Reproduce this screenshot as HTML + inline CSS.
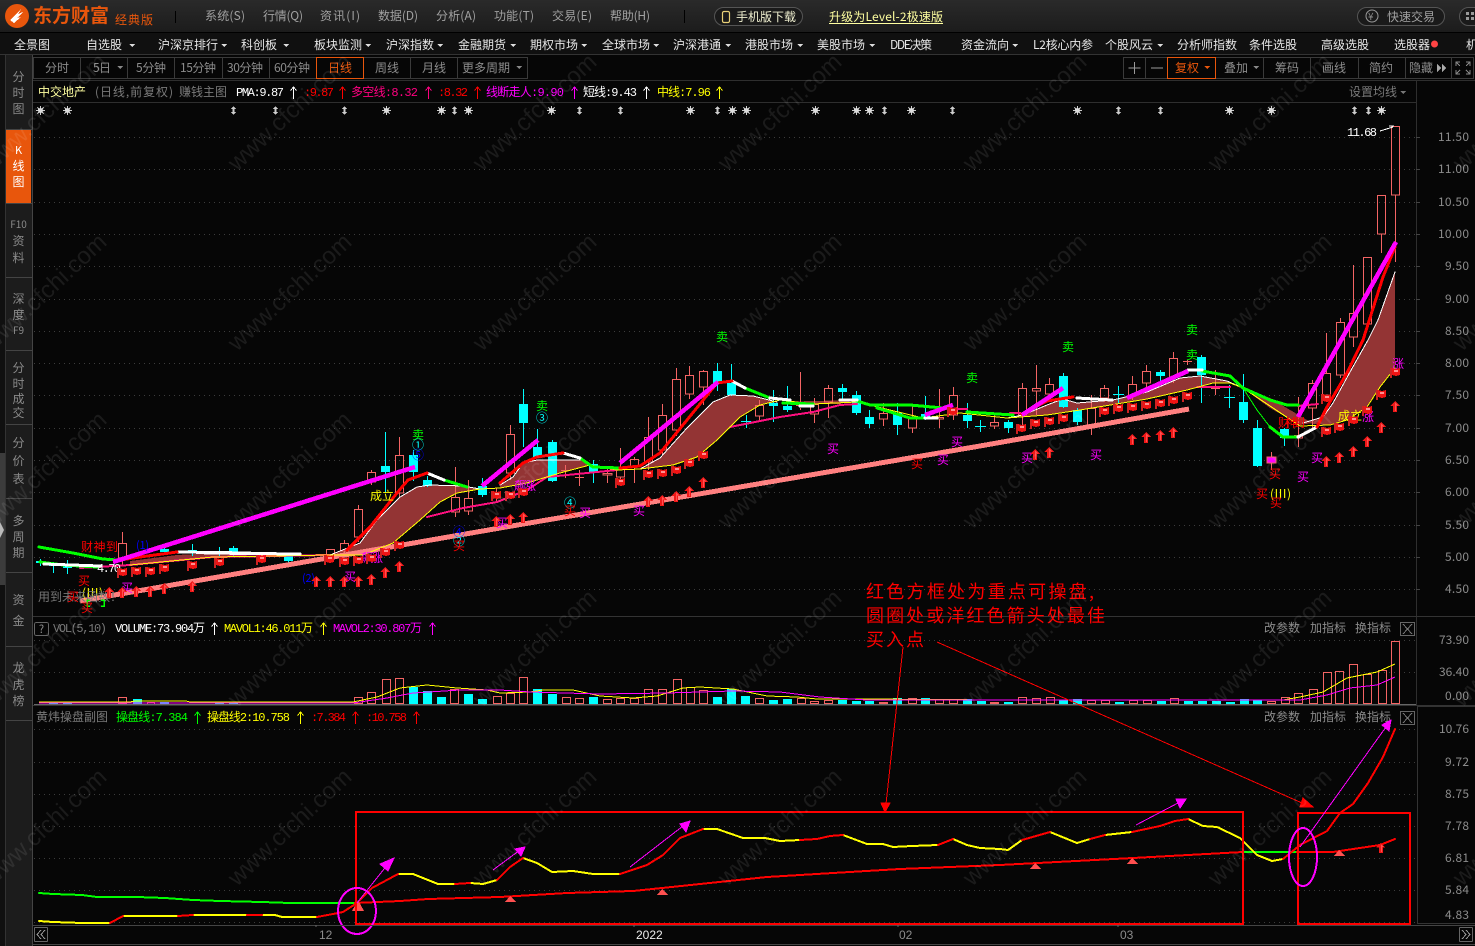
<!DOCTYPE html>
<html><head><meta charset="utf-8"><style>
html,body{margin:0;padding:0;background:#060606;width:1475px;height:946px;overflow:hidden}
svg{display:block;position:absolute;left:0;top:0}
text{font-family:"WenQuanYi Zen Hei","Noto Sans CJK SC",sans-serif;font-size:12px;white-space:pre}
path,rect,ellipse,circle{shape-rendering:crispEdges}
.m{font-family:"Liberation Mono","WenQuanYi Zen Hei","Noto Sans CJK SC",monospace;font-size:12px}
.g{fill:#8c8c8c}.w{fill:#fff}.n{fill:#e6e6e6}.y{fill:#ff0}.r{fill:#f00}.p{fill:#f0f}.gr{fill:#0f0}.c{fill:#0ff}.b{fill:#00f}
.e{font-size:12px;text-anchor:middle}
.s{fill:none;stroke-linejoin:round;stroke-linecap:round}
.grid{stroke:#3c3c3c;stroke-width:1;stroke-dasharray:1 4}
.ax{fill:#8c8c8c;font-family:"Liberation Mono",monospace;font-size:12px}
</style></head><body>
<svg width="1475" height="946" viewBox="0 0 1475 946" xmlns="http://www.w3.org/2000/svg">
<defs>
<linearGradient id="tb" x1="0" y1="0" x2="0" y2="1"><stop offset="0" stop-color="#2a2a2a"/><stop offset="1" stop-color="#1c1c1c"/></linearGradient>
<symbol id="ar" viewBox="0 0 10 12" overflow="visible"><path d="M5 0L10 5H7V11H3V5H0Z" fill="#f01818"/><path d="M5 1.5L8 4.5H6V10H5Z" fill="#ff5050"/></symbol>
<symbol id="fl" viewBox="0 0 11 10" overflow="visible"><path d="M0 1H2V11H0Z" fill="#c22"/><path d="M2 1L6 2L10 1V8L6 9L2 8Z" fill="#f01414"/><path d="M4 3H8V5H4Z" fill="#ff9090"/></symbol>
<symbol id="st" viewBox="0 0 9 9" overflow="visible"><path d="M4.5 0V9M0 4.500H9M1.300 1.300L7.700 7.700M7.700 1.300L1.300 7.700" stroke="#ccc" stroke-width="1.300"/><circle cx="4.500" cy="4.500" r="2.600" fill="#ddd"/></symbol>
<symbol id="ud" viewBox="0 0 5 9" overflow="visible"><path d="M2.500 0L5 3H3.500V6H5L2.500 9L0 6H1.500V3H0Z" fill="#ccc"/></symbol>
<symbol id="ua" viewBox="0 0 7 13" overflow="visible"><path d="M3.500 1V13M0.500 4.500L3.500 1L6.500 4.500" fill="none" stroke="currentColor"/></symbol>
</defs>

<!-- top bar -->
<rect width="1475" height="32" fill="url(#tb)"/>
<rect y="32" width="1475" height="1" fill="#000"/>
<rect y="33" width="1475" height="21" fill="#101010"/>
<rect y="54" width="1475" height="1" fill="#333"/>
<circle cx="17" cy="16" r="12" fill="#e8560c" style="shape-rendering:auto"/>
<path d="M10 20L22 8L18 14L23 12L17 18L21 17L14 23Z" fill="#fff"/>
<text x="33" y="22" style="font-size:19px;font-weight:bold" fill="#e8560c" textLength="76">东方财富</text>
<text x="115" y="24" fill="#e8560c" textLength="38">经典版</text>
<rect x="175" y="11" width="1" height="12" fill="#000"/><rect x="684" y="10" width="1" height="13" fill="#000"/>
<g class="g" style="fill:#a0a0a0">
<text x="205" y="20" textLength="40">系统(S)</text><text x="263" y="20" textLength="40">行情(Q)</text><text x="320" y="20" textLength="40">资讯(I)</text><text x="378" y="20" textLength="40">数据(D)</text><text x="436" y="20" textLength="40">分析(A)</text><text x="494" y="20" textLength="40">功能(T)</text><text x="552" y="20" textLength="40">交易(E)</text><text x="610" y="20" textLength="40">帮助(H)</text>
</g>
<rect x="714.500" y="7.500" width="88" height="18" rx="9" fill="#1a1a1a" stroke="#555" style="shape-rendering:auto"/>
<rect x="722.500" y="11.500" width="7" height="11" rx="1.500" fill="none" stroke="#e8d078" stroke-width="1.200" style="shape-rendering:auto"/>
<text x="736" y="21" fill="#f0f0d0" textLength="60">手机版下载</text>
<text x="829" y="21" fill="#ffffa0" textLength="114">升级为Level-2极速版</text>
<rect x="829" y="23" width="114" height="1" fill="#ffffa0"/>
<rect x="1357.500" y="7.500" width="87" height="18" rx="9" fill="#1a1a1a" stroke="#555" style="shape-rendering:auto"/>
<circle cx="1372" cy="16" r="6" fill="none" stroke="#999" style="shape-rendering:auto"/><text x="1368" y="20" class="g" style="font-size:10px">¥</text>
<text x="1387" y="21" style="fill:#a0a0a0" textLength="48">快速交易</text>
<rect x="1459.500" y="7.500" width="30" height="18" rx="9" fill="#1a1a1a" stroke="#555" style="shape-rendering:auto"/>
<path d="M1466 12h3v3h-3zM1471 12h3v3h-3zM1466 17h3v3h-3zM1471 17h3v3h-3z" fill="#999"/>

<!-- nav -->
<g class="n">
<text x="14" y="49">全景图</text><text x="86" y="49">自选股</text><text x="158" y="49">沪深京排行</text><text x="241" y="49">科创板</text><text x="314" y="49">板块监测</text><text x="386" y="49">沪深指数</text><text x="458" y="49">金融期货</text><text x="530" y="49">期权市场</text><text x="602" y="49">全球市场</text><text x="673" y="49">沪深港通</text><text x="745" y="49">港股市场</text><text x="817" y="49">美股市场</text><text x="890" y="49" textLength="42">DDE决策</text><text x="961" y="49">资金流向</text><text x="1033" y="49" textLength="60">L2核心内参</text><text x="1105" y="49">个股风云</text><text x="1177" y="49">分析师指数</text><text x="1249" y="49">条件选股</text><text x="1321" y="49">高级选股</text><text x="1394" y="49">选股器</text><text x="1466" y="49">机</text>
</g>
<path d="M129 44h6l-3 3zM221 44h6l-3 3zM283 44h6l-3 3zM365 44h6l-3 3zM437 44h6l-3 3zM510 44h6l-3 3zM581 44h6l-3 3zM653 44h6l-3 3zM725 44h6l-3 3zM797 44h6l-3 3zM869 44h6l-3 3zM1012 44h6l-3 3zM1157 44h6l-3 3z" fill="#ddd"/>
<circle cx="1434.500" cy="44" r="3.500" fill="#f44" style="shape-rendering:auto"/>

<!-- left sidebar -->
<rect y="55" width="6" height="891" fill="#101010"/>
<path d="M0 453H5V585H0Z" fill="#3c3c3c"/><path d="M0 522L4 530L0 538Z" fill="#bbb"/>
<rect x="6" y="55" width="26" height="891" fill="#1c1c1c"/>
<rect x="6" y="130" width="25" height="73" fill="#e8560c"/>
<path d="M6 129.500H32M6 203.500H32M6 277.500H32M6 350.500H32M6 424.500H32M6 498.500H32M6 572.500H32M6 646.500H32M6 720.500H32" stroke="#444"/>
<rect x="5" y="55" width="1" height="891" fill="#333"/>
<rect x="32" y="55" width="1" height="891" fill="#444"/>
<g class="g" text-anchor="middle" style="fill:#8a8a8a">
<text x="18.500" y="81">分</text><text x="18.500" y="97">时</text><text x="18.500" y="113">图</text>
<text class="w" style="fill:#fff;font-size:11px" x="18.500" y="154">K</text><text style="fill:#fff" x="18.500" y="170">线</text><text style="fill:#fff" x="18.500" y="186">图</text>
<text style="font-size:10px" x="18.500" y="228">F10</text><text x="18.500" y="245">资</text><text x="18.500" y="262">料</text>
<text x="18.500" y="303">深</text><text x="18.500" y="319">度</text><text style="font-size:10px" x="18.500" y="334">F9</text>
<text x="18.500" y="372">分</text><text x="18.500" y="388">时</text><text x="18.500" y="403">成</text><text x="18.500" y="417">交</text>
<text x="18.500" y="447">分</text><text x="18.500" y="465">价</text><text x="18.500" y="483">表</text>
<text x="18.500" y="525">多</text><text x="18.500" y="541">周</text><text x="18.500" y="557">期</text>
<text x="18.500" y="604">资</text><text x="18.500" y="625">金</text>
<text x="18.500" y="672">龙</text><text x="18.500" y="689">虎</text><text x="18.500" y="705">榜</text>
</g>

<!-- toolbar -->
<rect x="33" y="55" width="1442" height="26" fill="#060606"/>
<path d="M33.500 57.500H527.500V78.500H33.500ZM80.500 57V79M127.500 57V79M174.500 57V79M222.500 57V79M269.500 57V79M410.500 57V79M457.500 57V79" fill="none" stroke="#3a3a3a"/>
<rect x="316.500" y="57.500" width="47" height="21" fill="#060606" stroke="#e8560c"/>
<g style="fill:#8c8c8c">
<text x="45" y="72">分时</text><text x="93" y="72" textLength="18">5日</text><text x="136" y="72" textLength="30">5分钟</text><text x="180" y="72" textLength="36">15分钟</text><text x="227" y="72" textLength="36">30分钟</text><text x="274" y="72" textLength="36">60分钟</text><text x="375" y="72">周线</text><text x="422" y="72">月线</text><text x="462" y="72">更多周期</text>
</g>
<text x="328" y="72" fill="#e8560c">日线</text>
<path d="M117 66h6l-3 3zM516 66h6l-3 3zM1253 66h6l-3 3z" fill="#888"/>
<path d="M1123.500 57.500H1473.500V78.500H1123.500ZM1145.500 57V79M1263.500 57V79M1310.500 57V79M1358.500 57V79M1405.500 57V79M1451.500 57V79" fill="none" stroke="#3a3a3a"/>
<rect x="1167.500" y="57.500" width="48" height="21" fill="#060606" stroke="#e8560c"/>
<path d="M1134.500 62V74M1128.500 68H1140.500M1151 68H1163" stroke="#999" fill="none"/>
<text x="1175" y="72" fill="#e8560c">复权</text><path d="M1204 66h6l-3 3z" fill="#e8560c"/>
<g style="fill:#8c8c8c"><text x="1224" y="72">叠加</text><text x="1275" y="72">筹码</text><text x="1322" y="72">画线</text><text x="1369" y="72">简约</text><text x="1409" y="72">隐藏</text></g>
<path d="M1437 63.500L1441 68L1437 72.500ZM1442 63.500L1446 68L1442 72.500Z" fill="#aaa"/>
<path d="M1456 66V62H1460M1466 62H1470V66M1456 70V74H1460M1470 70V74H1466M1456 62L1460 66M1470 62L1466 66M1456 74L1460 70M1470 74L1466 70" fill="none" stroke="#888"/>
<rect x="33" y="80" width="1442" height="1" fill="#2e2e2e"/>

<!-- info row -->
<g>
<text x="38" y="96" fill="#ffffa0">中交地产</text>
<text x="95" y="96" fill="#7a7a7a" textLength="78">(日线,前复权)</text>
<text x="179" y="96" fill="#7a7a7a">赚钱主图</text>
<text x="236" y="96" class="m w" textLength="48">PMA:9.87</text>
<text x="304" y="96" class="m r" textLength="30">:9.87</text>
<text x="351" y="96" class="m" fill="#ff0080" textLength="67">多空线:8.32</text>
<text x="438" y="96" class="m r" textLength="30">:8.32</text>
<text x="486" y="96" class="m p" textLength="78">线断走人:9.90</text>
<text x="583" y="96" class="m w" textLength="54">短线:9.43</text>
<text x="657" y="96" class="m y" textLength="54">中线:7.96</text>
</g>
<use href="#ua" x="290" y="86" width="7" height="13" color="#fff"/><use href="#ua" x="339" y="86" width="7" height="13" color="#f00"/><use href="#ua" x="425" y="86" width="7" height="13" color="#ff0080"/><use href="#ua" x="474" y="86" width="7" height="13" color="#f00"/><use href="#ua" x="571" y="86" width="7" height="13" color="#f0f"/><use href="#ua" x="643" y="86" width="7" height="13" color="#fff"/><use href="#ua" x="716" y="86" width="7" height="13" color="#ff0"/>
<text x="1349" y="96" fill="#7a7a7a">设置均线</text><path d="M1400 91h6l-3 3z" fill="#777"/>
<rect x="33" y="102" width="1383" height="1" fill="#2e2e2e"/>
<rect x="1416" y="81" width="1" height="535" fill="#2e2e2e"/>

<!-- star row -->
<g>
<use href="#st" x="36" y="106" width="9" height="9"/><use href="#st" x="63" y="106" width="9" height="9"/><use href="#st" x="382" y="106" width="9" height="9"/><use href="#st" x="437" y="106" width="9" height="9"/><use href="#st" x="464" y="106" width="9" height="9"/><use href="#st" x="547" y="106" width="9" height="9"/><use href="#st" x="686" y="106" width="9" height="9"/><use href="#st" x="728" y="106" width="9" height="9"/><use href="#st" x="742" y="106" width="9" height="9"/><use href="#st" x="811" y="106" width="9" height="9"/><use href="#st" x="852" y="106" width="9" height="9"/><use href="#st" x="865" y="106" width="9" height="9"/><use href="#st" x="907" y="106" width="9" height="9"/><use href="#st" x="1073" y="106" width="9" height="9"/><use href="#st" x="1225" y="106" width="9" height="9"/><use href="#st" x="1267" y="106" width="9" height="9"/><use href="#st" x="1377" y="106" width="9" height="9"/>
<use href="#ud" x="231" y="106" width="5" height="9"/><use href="#ud" x="273" y="106" width="5" height="9"/><use href="#ud" x="342" y="106" width="5" height="9"/><use href="#ud" x="452" y="106" width="5" height="9"/><use href="#ud" x="577" y="106" width="5" height="9"/><use href="#ud" x="618" y="106" width="5" height="9"/><use href="#ud" x="715" y="106" width="5" height="9"/><use href="#ud" x="882" y="106" width="5" height="9"/><use href="#ud" x="950" y="106" width="5" height="9"/><use href="#ud" x="1116" y="106" width="5" height="9"/><use href="#ud" x="1158" y="106" width="5" height="9"/><use href="#ud" x="1352" y="106" width="5" height="9"/><use href="#ud" x="1366" y="106" width="5" height="9"/>
</g>

<!-- grid -->
<path class="grid" d="M34 137.500H1416M34 169.500H1416M34 202.500H1416M34 234.500H1416M34 266.500H1416M34 299.500H1416M34 331.500H1416M34 363.500H1416M34 395.500H1416M34 428.500H1416M34 460.500H1416M34 492.500H1416M34 525.500H1416M34 557.500H1416M34 589.500H1416M34 640.500H1416M34 672.500H1416M34 729.500H1416M34 762.500H1416M34 794.500H1416M34 826.500H1416M34 858.500H1416M34 890.500H1416M34 922.500H1416"/>
<path d="M1416 137.500h4M1416 169.500h4M1416 202.500h4M1416 234.500h4M1416 266.500h4M1416 299.500h4M1416 331.500h4M1416 363.500h4M1416 395.500h4M1416 428.500h4M1416 460.500h4M1416 492.500h4M1416 525.500h4M1416 557.500h4M1416 589.500h4" stroke="#444"/>

<!-- axis labels -->
<g class="ax">
<text x="1438" y="141" textLength="31">11.50</text><text x="1438" y="173" textLength="31">11.00</text><text x="1438" y="206" textLength="31">10.50</text><text x="1438" y="238" textLength="31">10.00</text><text x="1445" y="270" textLength="24">9.50</text><text x="1445" y="303" textLength="24">9.00</text><text x="1445" y="335" textLength="24">8.50</text><text x="1445" y="367" textLength="24">8.00</text><text x="1445" y="399" textLength="24">7.50</text><text x="1445" y="432" textLength="24">7.00</text><text x="1445" y="464" textLength="24">6.50</text><text x="1445" y="496" textLength="24">6.00</text><text x="1445" y="529" textLength="24">5.50</text><text x="1445" y="561" textLength="24">5.00</text><text x="1445" y="593" textLength="24">4.50</text>
<text x="1439" y="644" textLength="30">73.90</text><text x="1439" y="676" textLength="30">36.40</text><text x="1445" y="700" textLength="24">0.00</text>
<text x="1439" y="733" textLength="30">10.76</text><text x="1445" y="766" textLength="24">9.72</text><text x="1445" y="798" textLength="24">8.75</text><text x="1445" y="830" textLength="24">7.78</text><text x="1445" y="862" textLength="24">6.81</text><text x="1445" y="894" textLength="24">5.84</text><text x="1445" y="919" textLength="24">4.83</text>
</g>

<!-- bands -->
<g fill="#933434">
<path d="M130 561L177 555L215 553L250 553L290 553L213 557L130 565Z"/>
<path d="M330 555L360 543L377 520L400 497L417 487L430 485L463 486L480 489L457 493L440 502L420 520L393 543L363 555Z"/>
<path d="M500 485L513 477L523 463L537 460L583 460L590 465L560 473L527 483L500 488Z"/>
<path d="M617 470L640 469L660 458L687 428L713 402L730 395L753 396L777 402L760 405L740 417L717 440L697 457L673 465L640 469Z"/>
<path d="M777 402L813 401L857 400L840 404L813 404Z"/>
<path d="M1007 418L1023 415L1047 405L1063 399L1077 403L1113 400L1147 392L1180 378L1200 376L1227 381L1243 388L1230 383L1213 383L1187 390L1147 399L1080 410L1047 415Z"/>
<path d="M1243 388L1270 398L1312 423L1300 425L1270 408Z"/>
<path d="M1303 423L1323 417L1333 403L1350 372L1368 340L1378 320L1395 272V368L1380 387L1367 407L1347 420L1330 425Z"/>
</g>

<!-- candles -->
<g>
<path fill="none" stroke="#f46464" d="M122.500 532V543M122.500 558V565M118.500 543.500h8V558h-8zM330.500 550V549M330.500 555V558M326.500 549.500h8V555h-8zM344.500 540V543M344.500 551V556M340.500 543.500h8V551h-8zM358.500 505V509M358.500 537V542M354.500 509.500h8V537h-8zM371.500 470V472M371.500 482V485M367.500 472.500h8V482h-8zM399.500 437V455M399.500 493V497M395.500 455.500h8V493h-8zM455.500 467V497M455.500 512V517M451.500 497.500h8V512h-8zM468.500 480V498M468.500 511V515M464.500 498.500h8V511h-8zM496.500 488V492M496.500 498V503M492.500 492.500h8V498h-8zM510.500 425V434M510.500 473V480M506.500 434.500h8V473h-8zM565.500 465V478M561 470.500h9M579.500 470V486M575 477.500h9M607.500 467V473M607.500 475V483M603 473.500h9V475h-9zM620.500 448V467M620.500 477V483M616.500 467.500h8V477h-8zM634.500 457V459M634.500 467V483M630.500 459.500h8V467h-8zM648.500 417V437M648.500 462V470M644.500 437.500h8V462h-8zM662.500 404V415M662.500 450V455M658.500 415.500h8V450h-8zM676.500 368V379M676.500 430V436M672.500 379.500h8V430h-8zM689.500 366V375M689.500 394V399M685.500 375.500h8V394h-8zM703.500 370V371M703.500 387V405M699.500 371.500h8V387h-8zM759.500 400V405M759.500 416V420M755.500 405.500h8V416h-8zM800.500 372V405M800.500 408V410M796 405.500h9M814.500 398V404M814.500 414V423M810.500 404.500h8V414h-8zM828.500 385V388M828.500 402V418M824.500 388.500h8V402h-8zM883.500 403V413M883.500 419V426M879.500 413.500h8V419h-8zM912.500 405V418M912.500 428V433M908.500 418.500h8V428h-8zM939.500 389V417M939.500 419V428M935.500 417.500h8V419h-8zM953.500 387V395M953.500 415V420M949.500 395.500h8V415h-8zM994.500 415V422M994.500 426V429M990.500 422.500h8V426h-8zM1022.500 383V388M1022.500 415V425M1018.500 388.500h8V415h-8zM1036.500 365V388M1036.500 391V415M1032.500 388.500h8V391h-8zM1049.500 378V384M1049.500 394V400M1045.500 384.500h8V394h-8zM1091.500 395V408M1091.500 427V435M1087.500 408.500h8V427h-8zM1104.500 385V388M1104.500 398V402M1100.500 388.500h8V398h-8zM1132.500 376V384M1132.500 395V400M1128.500 384.500h8V395h-8zM1146.500 365V371M1146.500 383V392M1142.500 371.500h8V383h-8zM1173.500 352V358M1173.500 377V383M1169.500 358.500h8V377h-8zM1187.500 360V365M1183 361.500h9M1215.500 370V395M1211 388.500h9M1298.500 397V435M1298.500 438V447M1294.500 435.500h8V438h-8zM1312.500 380V383M1312.500 408V430M1308.500 383.500h8V408h-8zM1326.500 333V373M1322.500 373.500h8V395h-8zM1340.500 318V322M1340.500 375V378M1336.500 322.500h8V375h-8zM1353.500 265V313M1353.500 337V347M1349.500 313.500h8V337h-8zM1367.500 257V257M1367.500 324V330M1363.500 257.500h8V324h-8zM1381.500 234V253M1377.500 195.500h8V234h-8zM1395.500 195V262M1391.500 126.500h8V195h-8z"/>
<path fill="none" stroke="#0ff" d="M40.500 559V566M53.500 562V573M67.500 560V574M164.500 546V555M192.500 544V556M219.500 547V557M233.500 546V556M288.500 553V565M385.500 432V493M413.500 450V481M427.500 476V487M482.500 478V497M523.500 389V447M537.500 429V458M552.500 440V482M593.500 460V483M717.500 363V391M731.500 364V396M746.500 415V428M741 421.500h10M773.500 390V422M787.500 386V412M842.500 384V400M856.500 391V415M869.500 410V428M897.500 403V435M925.500 396V420M967.500 403V428M980.500 420V432M975 426.500h11M1008.500 420V433M1063.500 373V408M1077.500 408V425M1118.500 386V403M1113 394.500h11M1160.500 370V382M1201.500 355V403M1229.500 385V408M1224 397.500h11M1243.500 374V423M1257.500 420V467M1284.500 428V446"/>
<path fill="#0ff" d="M36 561h9v2h-9zM49 564h9v2h-9zM63 565h9v3h-9zM160 549h9v3h-9zM188 550h9v3h-9zM215 552h9v2h-9zM229 548h9v5h-9zM284 556h9v5h-9zM381 466h9v6h-9zM409 455h9v17h-9zM423 480h9v6h-9zM478 486h9v9h-9zM519 404h9v19h-9zM533 447h9v10h-9zM548 442h9v39h-9zM589 464h9v9h-9zM713 371h9v12h-9zM727 383h9v12h-9zM769 403h9v3h-9zM783 406h9v4h-9zM838 388h9v4h-9zM852 395h9v18h-9zM865 417h9v7h-9zM893 413h9v12h-9zM921 414h9v4h-9zM963 415h9v6h-9zM1004 422h9v6h-9zM1059 376h9v31h-9zM1073 410h9v12h-9zM1156 372h9v4h-9zM1197 357h9v18h-9zM1239 402h9v18h-9zM1253 428h9v38h-9zM1280 429h9v9h-9z"/>
<path d="M1271.500 452V470" stroke="#f46464"/><rect x="1267" y="457" width="9" height="6" fill="#f0f" stroke="#f46464"/>
</g>

<!-- salmon trend -->
<path class="s" d="M80 601L500 528L980 446L1189 409" stroke="#ff8080" stroke-width="5" style="stroke-linecap:butt"/>

<!-- pink lower -->
<path class="s" stroke="#ff1080" stroke-width="2" d="M80 568L130 565L213 557L330 555M427 517L463 508L497 502L527 490L547 477L617 470M730 427L780 417L813 412L840 405L857 404M957 409L967 409M1010 413L1020 413M1197 387L1230 387M1298 406L1318 404"/>

<!-- thin band edges -->
<g class="s" stroke-width="1">
<path stroke="#fff" d="M330 555L360 543L377 520L400 497L417 487L430 485L463 486L480 489M500 485L513 477L523 463L537 460L583 460M617 470L640 469L660 458L687 428L713 402L730 395L753 396L777 402M1007 418L1023 415L1047 405L1063 399L1077 403L1113 400L1147 392L1180 378L1200 376L1227 381L1243 388M1303 423L1323 417L1333 403L1350 372L1368 340L1378 320L1395 272"/>
<path stroke="#ff0" d="M130 565L213 557L330 555L363 555L393 543L420 520L440 502L457 493L480 489L500 488L527 483L560 473L590 465L617 470L640 469L673 465L697 457L717 440L740 417L760 405L780 400L813 404L857 402L890 410L923 418L960 413L1007 418L1047 415L1080 410L1147 399L1187 390L1213 383L1230 383L1243 388L1300 426L1330 425L1347 420L1367 407L1380 387L1395 368"/>
<path stroke="#0f0" d="M1243 388L1257 410L1270 427L1283 437"/>
</g>

<!-- thicker lines -->
<g class="s" stroke-width="3">
<path stroke="#0f0" d="M39 547L73 553L103 559L117 560M40 562L63 565L97 567M444 480L467 487M580 458L593 467L620 468M745 388L770 398M783 403L813 404M857 401L870 405L910 405L943 408M967 412L1013 415M877 408L910 418L925 418M1202 371L1230 376L1243 388L1270 400L1287 405L1298 405M1270 427L1283 437L1298 437"/>
<path stroke="#fff" d="M44 564L100 566M177 552L250 553M427 473L444 480M563 453L580 458M732 381L745 388M770 398L790 400M800 406L813 406M840 400L857 400M925 418L937 418M1077 398L1112 400M1188 370L1202 370M1298 437L1317 427M205 553L300 554"/>
<path stroke="#f00" d="M120 560L140 557L177 552M347 550L370 527L397 493L408 480L427 473M500 483L523 463L537 457L563 453M620 468L640 466L660 453L687 420L717 383L732 381M1022 414L1047 401L1073 397M1317 427L1327 407L1347 373L1363 340L1383 277L1395 247"/>
<path stroke="#f0f" stroke-width="4.500" d="M113 562L415 467M482 486L538 440M620 463L718 382M925 415L953 405M1022 415L1063 388M1127 398L1188 371M1298 417L1396 242" style="stroke-linecap:butt"/>
</g>

<!-- 11.68 -->
<text x="1347" y="136" class="m w" textLength="30">11.68</text>
<path d="M1380 131L1393 127M1389 126H1394" stroke="#fff" fill="none"/>

<!-- labels -->
<g>
<text x="81" y="551" class="r" style="font-size:12px" textLength="37">财神到</text>
<text x="136" y="549" class="b" style="font-size:11px" textLength="13">(1)</text>
<text x="302" y="582" class="b" style="font-size:11px" textLength="13">(2)</text>
<text x="82" y="597" class="y" style="font-size:12px" textLength="21">(III)</text>
<text x="38" y="601" fill="#777">用到未来函数！</text>
<path d="M90 600H87V606H90M101 600H104V606H101" stroke="#0f0" stroke-width="1.500" fill="none"/>
<text x="370" y="500" class="y" style="font-size:12px" textLength="24">成立</text>
<text x="1338" y="420" class="y" style="font-size:12px" textLength="24">成立</text>
<text x="1278" y="427" class="r" style="font-size:12px" textLength="27">财神到</text>
<text x="1270" y="498" class="y" style="font-size:12px" textLength="21">(III)</text>
<g class="e">
<text class="e r" x="84" y="585">买</text><text class="e p" x="127" y="592">买</text><text class="e r" x="73" y="601">买</text><text class="e r" x="87" y="612">买</text>
<text class="e gr" x="418" y="439">卖</text><text class="e c" x="418" y="449">①</text><text class="e b" x="418" y="459">⑤</text>
<text class="e b" x="459" y="536">④</text><text class="e c" x="459" y="545">②</text><text class="e r" x="459" y="550">买</text><text class="e p" x="502" y="527">买</text><text class="e p" x="350" y="581">买</text>
<text class="p" x="372" y="562" textLength="22">飙涨</text>
<text class="e gr" x="722" y="341">卖</text><text class="e gr" x="542" y="410">卖</text><text class="e c" x="542" y="422">③</text><text class="p" x="525" y="490" textLength="22">飙涨</text>
<text class="e c" x="570" y="507">④</text><text class="e r" x="570" y="515">买</text><text class="e p" x="585" y="517">买</text><text class="e p" x="639" y="515">买</text>
<text class="e p" x="833" y="453">买</text>
<text class="e p" x="957" y="446">买</text><text class="e r" x="917" y="468">买</text><text class="e p" x="943" y="464">买</text><text class="e gr" x="972" y="382">卖</text>
<text class="e gr" x="1068" y="351">卖</text><text class="e gr" x="1192" y="334">卖</text><text class="e gr" x="1192" y="359">卖</text><text class="e p" x="1027" y="462">买</text><text class="e p" x="1096" y="459">买</text>
<text class="e r" x="1275" y="478">买</text><text class="e r" x="1262" y="498">买</text><text class="e r" x="1276" y="507">买</text><text class="e p" x="1303" y="481">买</text><text class="e p" x="1317" y="462">买</text><text class="e p" x="1368" y="421">涨</text><text class="e p" x="1398" y="368">涨</text>
</g>
<text x="97" y="572" class="m w" textLength="24">4.70</text>
</g>

<!-- flags -->
<g>
<use href="#fl" x="117" y="567" width="11" height="10"/><use href="#fl" x="131" y="566" width="11" height="10"/><use href="#fl" x="145" y="566" width="11" height="10"/><use href="#fl" x="159" y="563" width="11" height="10"/><use href="#fl" x="187" y="560" width="11" height="10"/><use href="#fl" x="214" y="557" width="11" height="10"/><use href="#fl" x="256" y="554" width="11" height="10"/><use href="#fl" x="324" y="554" width="11" height="10"/><use href="#fl" x="339" y="556" width="11" height="10"/><use href="#fl" x="353" y="555" width="11" height="10"/><use href="#fl" x="366" y="553" width="11" height="10"/><use href="#fl" x="380" y="547" width="11" height="10"/><use href="#fl" x="394" y="540" width="11" height="10"/><use href="#fl" x="491" y="490" width="11" height="10"/><use href="#fl" x="505" y="490" width="11" height="10"/><use href="#fl" x="518" y="487" width="11" height="10"/><use href="#fl" x="615" y="477" width="11" height="10"/><use href="#fl" x="643" y="469" width="11" height="10"/><use href="#fl" x="657" y="468" width="11" height="10"/><use href="#fl" x="671" y="465" width="11" height="10"/><use href="#fl" x="684" y="458" width="11" height="10"/><use href="#fl" x="698" y="450" width="11" height="10"/><use href="#fl" x="947" y="406" width="11" height="10"/>
<use href="#fl" x="1016" y="423" width="11" height="10"/><use href="#fl" x="1030" y="418" width="11" height="10"/><use href="#fl" x="1044" y="416" width="11" height="10"/><use href="#fl" x="1058" y="413" width="11" height="10"/><use href="#fl" x="1099" y="406" width="11" height="10"/><use href="#fl" x="1113" y="403" width="11" height="10"/><use href="#fl" x="1127" y="402" width="11" height="10"/><use href="#fl" x="1141" y="400" width="11" height="10"/><use href="#fl" x="1155" y="398" width="11" height="10"/><use href="#fl" x="1168" y="395" width="11" height="10"/><use href="#fl" x="1182" y="391" width="11" height="10"/><use href="#fl" x="1321" y="393" width="11" height="10"/><use href="#fl" x="1321" y="426" width="11" height="10"/><use href="#fl" x="1334" y="422" width="11" height="10"/><use href="#fl" x="1348" y="415" width="11" height="10"/><use href="#fl" x="1362" y="405" width="11" height="10"/><use href="#fl" x="1376" y="389" width="11" height="10"/><use href="#fl" x="1390" y="367" width="11" height="10"/>
</g>
<!-- arrows -->
<g>
<use href="#ar" x="104" y="587" width="10" height="12"/><use href="#ar" x="117" y="587" width="10" height="12"/><use href="#ar" x="131" y="586" width="10" height="12"/><use href="#ar" x="145" y="586" width="10" height="12"/><use href="#ar" x="159" y="583" width="10" height="12"/><use href="#ar" x="187" y="581" width="10" height="12"/><use href="#ar" x="311" y="576" width="10" height="12"/><use href="#ar" x="325" y="576" width="10" height="12"/><use href="#ar" x="339" y="576" width="10" height="12"/><use href="#ar" x="353" y="576" width="10" height="12"/><use href="#ar" x="366" y="574" width="10" height="12"/><use href="#ar" x="380" y="567" width="10" height="12"/><use href="#ar" x="394" y="561" width="10" height="12"/><use href="#ar" x="491" y="516" width="10" height="12"/><use href="#ar" x="505" y="514" width="10" height="12"/><use href="#ar" x="518" y="512" width="10" height="12"/><use href="#ar" x="643" y="496" width="10" height="12"/><use href="#ar" x="657" y="495" width="10" height="12"/><use href="#ar" x="671" y="491" width="10" height="12"/><use href="#ar" x="684" y="486" width="10" height="12"/><use href="#ar" x="698" y="477" width="10" height="12"/>
<use href="#ar" x="1030" y="449" width="10" height="12"/><use href="#ar" x="1044" y="447" width="10" height="12"/><use href="#ar" x="1127" y="434" width="10" height="12"/><use href="#ar" x="1141" y="432" width="10" height="12"/><use href="#ar" x="1155" y="430" width="10" height="12"/><use href="#ar" x="1168" y="427" width="10" height="12"/><use href="#ar" x="1321" y="456" width="10" height="12"/><use href="#ar" x="1334" y="452" width="10" height="12"/><use href="#ar" x="1348" y="446" width="10" height="12"/><use href="#ar" x="1362" y="436" width="10" height="12"/><use href="#ar" x="1376" y="422" width="10" height="12"/><use href="#ar" x="1390" y="401" width="10" height="12"/>
</g>

<!-- VOL panel -->
<rect x="33" y="616" width="1442" height="1" fill="#333"/>
<rect x="34.500" y="622.500" width="14" height="13" rx="2" fill="none" stroke="#666"/>
<text x="41.500" y="633" text-anchor="middle" class="g" style="font-size:11px">?</text>
<text x="53" y="632" class="m" fill="#777" textLength="54">VOL(5,10)</text>
<text x="115" y="632" class="m w" textLength="90">VOLUME:73.904万</text>
<text x="224" y="632" class="m y" textLength="89">MAVOL1:46.011万</text>
<text x="333" y="632" class="m p" textLength="89">MAVOL2:30.807万</text>
<use href="#ua" x="211" y="622" width="7" height="13" color="#fff"/><use href="#ua" x="320" y="622" width="7" height="13" color="#ff0"/><use href="#ua" x="429" y="622" width="7" height="13" color="#f0f"/>
<g style="fill:#8c8c8c"><text x="1264" y="632" textLength="36">改参数</text><text x="1310" y="632" textLength="36">加指标</text><text x="1355" y="632" textLength="36">换指标</text></g>
<rect x="1400.500" y="622.500" width="14" height="13" fill="none" stroke="#666"/><path d="M1403 624L1412 634M1412 624L1403 634" stroke="#777"/>

<g>
<path fill="#0ff" d="M49 702h9v2h-9zM63 703h9v1h-9zM133 699h9v5h-9zM160 702h9v2h-9zM215 703h9v1h-9zM229 703h9v1h-9zM409 687h9v17h-9zM423 691h9v13h-9zM437 697h9v7h-9zM464 694h9v10h-9zM478 699h9v5h-9zM533 689h9v15h-9zM548 694h9v10h-9zM589 697h9v7h-9zM713 697h9v7h-9zM727 689h9v15h-9zM741 696h9v8h-9zM769 700h9v4h-9zM783 699h9v5h-9zM838 700h9v4h-9zM852 701h9v3h-9zM865 701h9v3h-9zM893 698h9v6h-9zM921 698h9v6h-9zM963 699h9v5h-9zM977 701h9v3h-9zM1004 702h9v2h-9zM1059 700h9v4h-9zM1073 699h9v5h-9zM1115 702h9v2h-9zM1157 701h9v3h-9zM1184 701h9v3h-9zM1198 701h9v3h-9zM1212 701h9v3h-9zM1226 702h9v2h-9zM1240 699h9v5h-9zM1253 700h9v4h-9z"/>
<path fill="none" stroke="#f46464" d="M118.500 697.500h8v6h-8zM147.500 702.500h7v2h-7zM354.500 697.500h8v6h-8zM367.500 692.500h8v11h-8zM382.500 679.500h8v24h-8zM395.500 678.500h8v25h-8zM450.500 689.500h8v14h-8zM493.500 696.500h8v7h-8zM506.500 693.500h8v10h-8zM519.500 677.500h8v26h-8zM562.500 697.500h8v6h-8zM575.500 698.500h8v5h-8zM603.500 699.500h8v4h-8zM616.500 698.500h8v5h-8zM630.500 698.500h8v5h-8zM644.500 689.500h8v14h-8zM658.500 689.500h8v14h-8zM673.500 679.500h8v24h-8zM686.500 687.500h8v16h-8zM699.500 690.500h8v13h-8zM755.500 698.500h8v5h-8zM797.500 698.500h8v5h-8zM810.500 701.500h8v2h-8zM824.500 700.500h8v3h-8zM879.500 702.500h8v1h-8zM908.500 698.500h8v5h-8zM935.500 699.500h8v4h-8zM949.500 699.500h8v4h-8zM990.500 702.500h8v1h-8zM1018.500 697.500h8v6h-8zM1032.500 698.500h8v5h-8zM1046.500 697.500h8v6h-8zM1087.500 700.500h8v3h-8zM1101.500 700.500h8v3h-8zM1129.500 700.500h8v3h-8zM1143.500 700.500h8v3h-8zM1170.500 698.500h8v5h-8zM1267.500 701.500h8v2h-8zM1281.500 697.500h8v6h-8zM1294.500 693.500h8v10h-8zM1309.500 689.500h8v14h-8zM1323.500 672.500h8v31h-8zM1335.500 671.500h8v32h-8zM1349.500 664.500h8v39h-8zM1363.500 674.500h8v29h-8zM1378.500 670.500h8v33h-8zM1391.500 641.500h8v62h-8z"/>
</g>
<path fill="none" stroke="#ff0" stroke-width="1" d="M39 702H130L135 701H186L190 702H353L377 697L400 688L427 685L457 688L487 690L500 693L530 692L543 690L573 690L600 696L633 698L657 696L683 688L700 687L733 689L767 696L797 697L817 699L867 699L1000 700H1283L1300 697L1323 692L1347 678L1377 672L1395 664"/>
<path fill="none" stroke="#f0f" stroke-width="1" d="M39 703H353L387 698L413 693L460 690L500 690L530 692L600 694L667 693L733 691L780 692L820 697L867 700H1300L1327 695L1350 688L1377 685L1395 677"/>
<rect x="34" y="704" width="1382" height="1" fill="#666"/>
<rect x="33" y="705" width="1442" height="1" fill="#333"/>
<rect x="1416" y="617" width="1" height="88" fill="#2e2e2e"/>

<!-- indicator panel -->
<rect x="1417.500" y="706.500" width="70" height="217" fill="none" stroke="#333"/>
<text x="36" y="721" fill="#7a7a7a">黄炜操盘副图</text>
<text x="116" y="721" class="m gr" textLength="72">操盘线:7.384</text>
<text x="207" y="721" class="m y" textLength="83">操盘线2:10.758</text>
<text x="311" y="721" class="m r" textLength="35">:7.384</text>
<text x="366" y="721" class="m r" textLength="41">:10.758</text>
<use href="#ua" x="194" y="711" width="7" height="13" color="#0f0"/><use href="#ua" x="297" y="711" width="7" height="13" color="#ff0"/><use href="#ua" x="352" y="711" width="7" height="13" color="#f00"/><use href="#ua" x="413" y="711" width="7" height="13" color="#f00"/>
<g style="fill:#8c8c8c"><text x="1264" y="721" textLength="36">改参数</text><text x="1310" y="721" textLength="36">加指标</text><text x="1355" y="721" textLength="36">换指标</text></g>
<rect x="1400.500" y="711.500" width="14" height="13" fill="none" stroke="#666"/><path d="M1403 713L1412 723M1412 713L1403 723" stroke="#777"/>

<g class="s" stroke-width="2" style="stroke-linejoin:miter">
<path stroke="#0f0" d="M39 893L53 894L82 895L97 897L137 897L165 898L193 900L220 901L262 902L290 903L355 903M1243 852H1297"/>
<path stroke="#f00" d="M355 903L400 901L428 899L500 897L567 893L633 891L662 888L700 884L767 877L833 873L900 869L950 867L1000 865L1133 858L1243 852M1297 852L1333 852L1380 845L1395 839"/>
<path stroke="#ff0" d="M39 921L53 922L82 923L110 923M123 916L178 916M193 915L247 915M262 915L275 915L282 917L317 917M398 874L413 874L438 884L455 884M470 883L483 884L497 880M523 858L537 863L552 872L573 871L593 874L620 874M703 829L717 829L743 838L765 838L780 841L800 840M843 835L867 844L883 844L893 847L912 846L938 845M953 839L967 845L980 848L1000 849L1008 850L1022 840M1050 832L1077 843L1090 839M1105 835L1132 832M1188 819L1203 826L1217 827L1240 838L1257 855L1272 861L1283 859"/>
<path stroke="#f00" d="M110 923L123 916M178 916L193 915M247 915L262 915M317 917L333 914L343 912L357 903L372 888L398 874M455 884L470 883M497 880L510 867L523 858M620 874L647 865L663 855L680 838L703 829M800 840L817 839L830 836L843 835M938 845L953 839M1022 840L1050 832M1090 839L1105 835M1132 832L1160 826L1175 821L1188 819M1283 859L1300 845L1327 831L1340 813L1353 804L1368 783L1383 757L1395 729"/>
</g>
<path d="M352 911L358 900L364 911ZM505 902L510 896L516 902ZM657 895L662 889L668 895ZM1030 869L1035 863L1041 869ZM1127 864L1132 858L1138 864ZM1334 856L1339 850L1345 856Z" fill="#ff5050"/>
<use href="#ar" x="1376" y="843" width="10" height="11"/>

<!-- annotation boxes -->
<rect x="356" y="812" width="887" height="112" fill="none" stroke="#f00" stroke-width="2"/>
<rect x="1298" y="813" width="112" height="111" fill="none" stroke="#f00" stroke-width="2"/>
<ellipse cx="357" cy="911" rx="19" ry="23" fill="none" stroke="#f0f" stroke-width="2"/>
<ellipse cx="1303" cy="857" rx="14" ry="29" fill="none" stroke="#f0f" stroke-width="2"/>
<g stroke="#f0f" fill="#f0f">
<path d="M357 903L388 864"/><path d="M394 858L380 864L388 871Z"/>
<path d="M493 870L520 850"/><path d="M525 847L515 849L521 856Z"/>
<path d="M630 867L683 826"/><path d="M690 821L680 824L686 832Z"/>
<path d="M1136 825L1178 803"/><path d="M1186 799L1176 799L1180 808Z"/>
<path d="M1300 847L1386 727"/><path d="M1391 720L1382 725L1389 731Z"/>
</g>
<g stroke="#f00" fill="#f00">
<path d="M903 647L886 804"/><path d="M885 812L881 803L890 803Z"/>
<path d="M937 642L1302 803"/><path d="M1313 807L1303 798L1300 807Z"/>
</g>
<g fill="#f00" style="font-size:18px">
<text x="866" y="598" style="font-size:18px" textLength="228">红色方框处为重点可操盘,</text>
<text x="866" y="622" style="font-size:18px" textLength="239">圆圈处或洋红色箭头处最佳</text>
<text x="866" y="646" style="font-size:18px" textLength="58">买入点</text>
</g>

<!-- bottom -->
<rect x="33" y="925" width="1442" height="1" fill="#444"/>
<rect x="33" y="944" width="1442" height="1" fill="#444"/>
<rect x="34.500" y="927.500" width="13" height="14" rx="1" fill="none" stroke="#666"/>
<path d="M41 930L37 934.500L41 939M45 930L41 934.500L45 939" fill="none" stroke="#999"/>
<rect x="1459.500" y="927.500" width="13" height="14" rx="1" fill="none" stroke="#666"/>
<path d="M1462 930L1466 934.500L1462 939M1466 930L1470 934.500L1466 939" fill="none" stroke="#999"/>
<path d="M316 925v2M634 925v2M898 925v2M1118 925v2" stroke="#666"/>
<g style="font-family:'Liberation Sans',sans-serif;font-size:12px">
<text x="319" y="939" fill="#8c8c8c" style="font-family:'Liberation Sans',sans-serif">12</text>
<text x="636" y="939" fill="#eee" style="font-family:'Liberation Sans',sans-serif">2022</text>
<text x="899" y="939" fill="#8c8c8c" style="font-family:'Liberation Sans',sans-serif">02</text>
<text x="1120" y="939" fill="#8c8c8c" style="font-family:'Liberation Sans',sans-serif">03</text>
</g>
</svg>

<!-- watermark overlay -->
<svg width="1475" height="946" viewBox="0 0 1475 946" xmlns="http://www.w3.org/2000/svg" style="pointer-events:none">
<defs><clipPath id="wc"><rect x="0" y="55" width="1475" height="891"/></clipPath></defs>
<g clip-path="url(#wc)" fill="#fff" fill-opacity=".085">
<g style="font-family:'Liberation Sans',sans-serif">
<text style="font-family:'Liberation Sans',sans-serif;font-size:24px" x="-8" y="172" transform="rotate(-43 -8 172)">www.cfchi.com</text>
<text style="font-family:'Liberation Sans',sans-serif;font-size:24px" x="237" y="172" transform="rotate(-43 237 172)">www.cfchi.com</text>
<text style="font-family:'Liberation Sans',sans-serif;font-size:24px" x="482" y="172" transform="rotate(-43 482 172)">www.cfchi.com</text>
<text style="font-family:'Liberation Sans',sans-serif;font-size:24px" x="727" y="172" transform="rotate(-43 727 172)">www.cfchi.com</text>
<text style="font-family:'Liberation Sans',sans-serif;font-size:24px" x="972" y="172" transform="rotate(-43 972 172)">www.cfchi.com</text>
<text style="font-family:'Liberation Sans',sans-serif;font-size:24px" x="1217" y="172" transform="rotate(-43 1217 172)">www.cfchi.com</text>
<text style="font-family:'Liberation Sans',sans-serif;font-size:24px" x="1462" y="172" transform="rotate(-43 1462 172)">www.cfchi.com</text>
<text style="font-family:'Liberation Sans',sans-serif;font-size:24px" x="-8" y="352" transform="rotate(-43 -8 352)">www.cfchi.com</text>
<text style="font-family:'Liberation Sans',sans-serif;font-size:24px" x="237" y="352" transform="rotate(-43 237 352)">www.cfchi.com</text>
<text style="font-family:'Liberation Sans',sans-serif;font-size:24px" x="482" y="352" transform="rotate(-43 482 352)">www.cfchi.com</text>
<text style="font-family:'Liberation Sans',sans-serif;font-size:24px" x="727" y="352" transform="rotate(-43 727 352)">www.cfchi.com</text>
<text style="font-family:'Liberation Sans',sans-serif;font-size:24px" x="972" y="352" transform="rotate(-43 972 352)">www.cfchi.com</text>
<text style="font-family:'Liberation Sans',sans-serif;font-size:24px" x="1217" y="352" transform="rotate(-43 1217 352)">www.cfchi.com</text>
<text style="font-family:'Liberation Sans',sans-serif;font-size:24px" x="1462" y="352" transform="rotate(-43 1462 352)">www.cfchi.com</text>
<text style="font-family:'Liberation Sans',sans-serif;font-size:24px" x="-8" y="530" transform="rotate(-43 -8 530)">www.cfchi.com</text>
<text style="font-family:'Liberation Sans',sans-serif;font-size:24px" x="237" y="530" transform="rotate(-43 237 530)">www.cfchi.com</text>
<text style="font-family:'Liberation Sans',sans-serif;font-size:24px" x="482" y="530" transform="rotate(-43 482 530)">www.cfchi.com</text>
<text style="font-family:'Liberation Sans',sans-serif;font-size:24px" x="727" y="530" transform="rotate(-43 727 530)">www.cfchi.com</text>
<text style="font-family:'Liberation Sans',sans-serif;font-size:24px" x="972" y="530" transform="rotate(-43 972 530)">www.cfchi.com</text>
<text style="font-family:'Liberation Sans',sans-serif;font-size:24px" x="1217" y="530" transform="rotate(-43 1217 530)">www.cfchi.com</text>
<text style="font-family:'Liberation Sans',sans-serif;font-size:24px" x="1462" y="530" transform="rotate(-43 1462 530)">www.cfchi.com</text>
<text style="font-family:'Liberation Sans',sans-serif;font-size:24px" x="-8" y="708" transform="rotate(-43 -8 708)">www.cfchi.com</text>
<text style="font-family:'Liberation Sans',sans-serif;font-size:24px" x="237" y="708" transform="rotate(-43 237 708)">www.cfchi.com</text>
<text style="font-family:'Liberation Sans',sans-serif;font-size:24px" x="482" y="708" transform="rotate(-43 482 708)">www.cfchi.com</text>
<text style="font-family:'Liberation Sans',sans-serif;font-size:24px" x="727" y="708" transform="rotate(-43 727 708)">www.cfchi.com</text>
<text style="font-family:'Liberation Sans',sans-serif;font-size:24px" x="972" y="708" transform="rotate(-43 972 708)">www.cfchi.com</text>
<text style="font-family:'Liberation Sans',sans-serif;font-size:24px" x="1217" y="708" transform="rotate(-43 1217 708)">www.cfchi.com</text>
<text style="font-family:'Liberation Sans',sans-serif;font-size:24px" x="1462" y="708" transform="rotate(-43 1462 708)">www.cfchi.com</text>
<text style="font-family:'Liberation Sans',sans-serif;font-size:24px" x="-8" y="887" transform="rotate(-43 -8 887)">www.cfchi.com</text>
<text style="font-family:'Liberation Sans',sans-serif;font-size:24px" x="237" y="887" transform="rotate(-43 237 887)">www.cfchi.com</text>
<text style="font-family:'Liberation Sans',sans-serif;font-size:24px" x="482" y="887" transform="rotate(-43 482 887)">www.cfchi.com</text>
<text style="font-family:'Liberation Sans',sans-serif;font-size:24px" x="727" y="887" transform="rotate(-43 727 887)">www.cfchi.com</text>
<text style="font-family:'Liberation Sans',sans-serif;font-size:24px" x="972" y="887" transform="rotate(-43 972 887)">www.cfchi.com</text>
<text style="font-family:'Liberation Sans',sans-serif;font-size:24px" x="1217" y="887" transform="rotate(-43 1217 887)">www.cfchi.com</text>
<text style="font-family:'Liberation Sans',sans-serif;font-size:24px" x="1462" y="887" transform="rotate(-43 1462 887)">www.cfchi.com</text>
</g>
</g>
</svg>
</body></html>
